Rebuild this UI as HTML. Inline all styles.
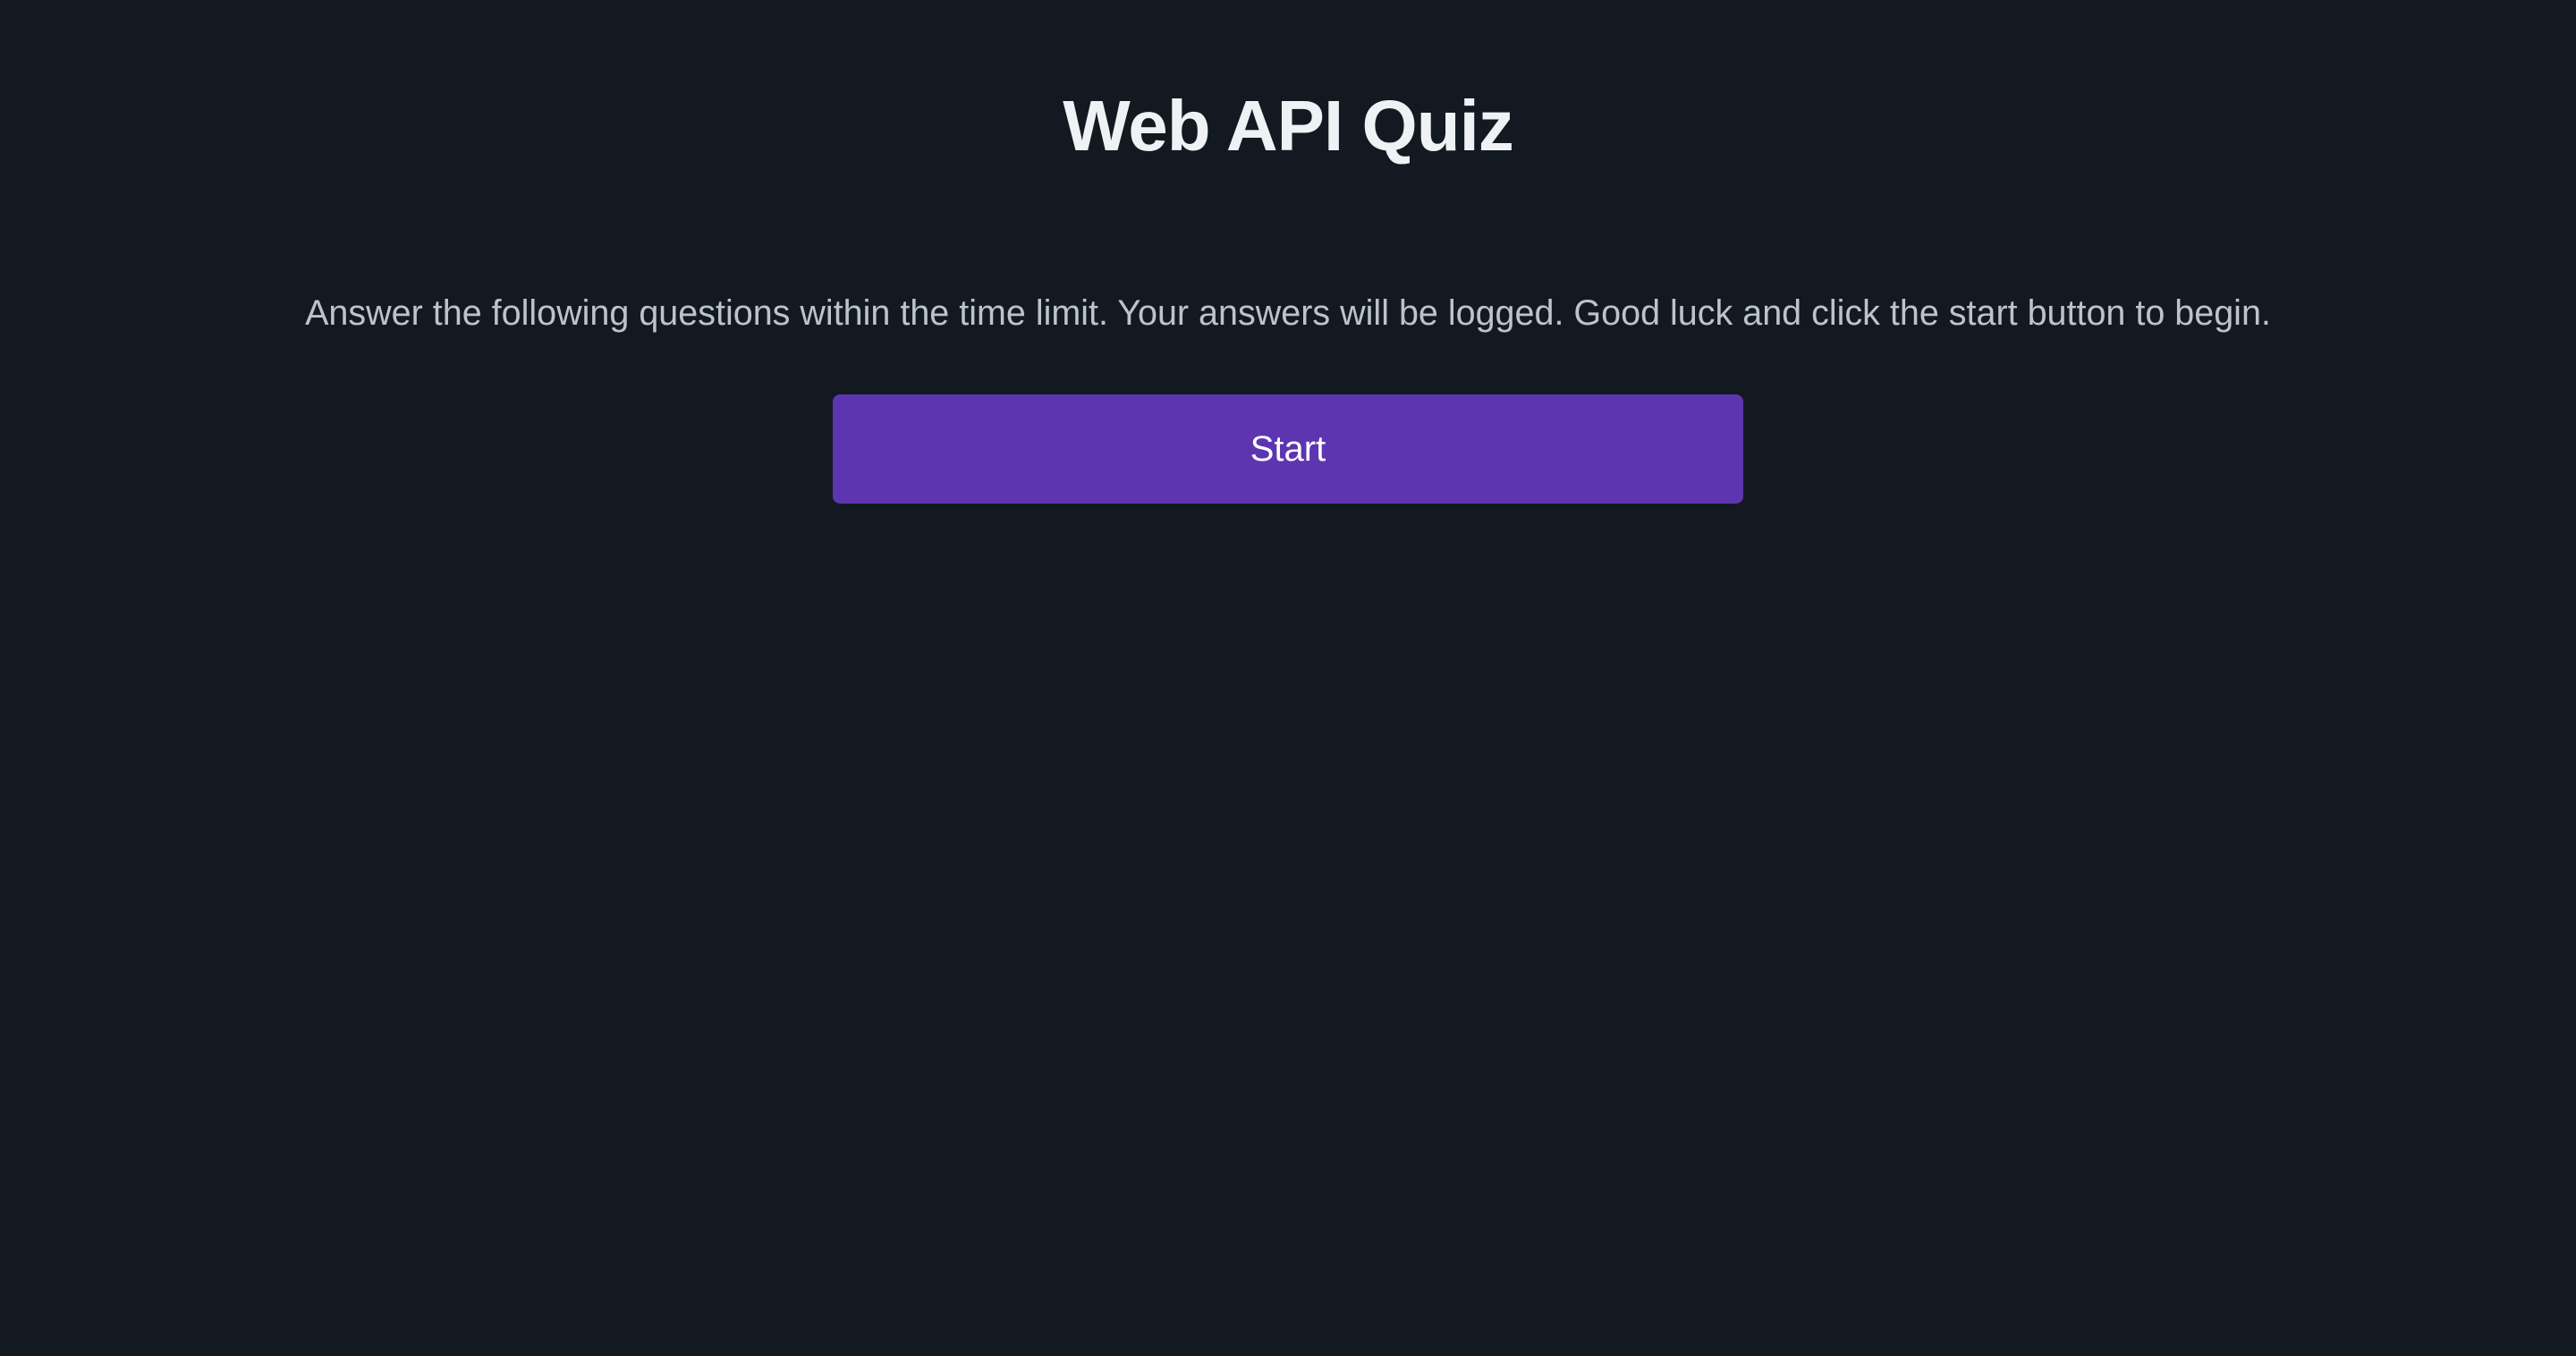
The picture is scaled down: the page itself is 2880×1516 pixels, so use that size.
<!DOCTYPE html>
<html><head><meta charset="utf-8"><style>
html,body{margin:0;padding:0;width:2880px;height:1516px;background:#131920;overflow:hidden;font-family:"Liberation Sans",sans-serif;}
h1{position:absolute;left:0;width:2880px;top:86px;margin:0;text-align:center;font-size:80px;line-height:110px;font-weight:bold;color:#eef2f5;letter-spacing:-1px;}
p{position:absolute;left:0;width:2880px;top:325px;margin:0;text-align:center;font-size:39.5px;line-height:50px;color:#bcc3cb;}
.btn{position:absolute;left:931px;top:441px;width:1018px;height:122px;background:#5e35b1;border-radius:8px;color:#fff;font-size:40px;line-height:122px;text-align:center;}
</style></head><body>
<h1>Web API Quiz</h1>
<p>Answer the following questions within the time limit. Your answers will be logged. Good luck and click the start button to begin.</p>
<div class="btn">Start</div>
</body></html>
